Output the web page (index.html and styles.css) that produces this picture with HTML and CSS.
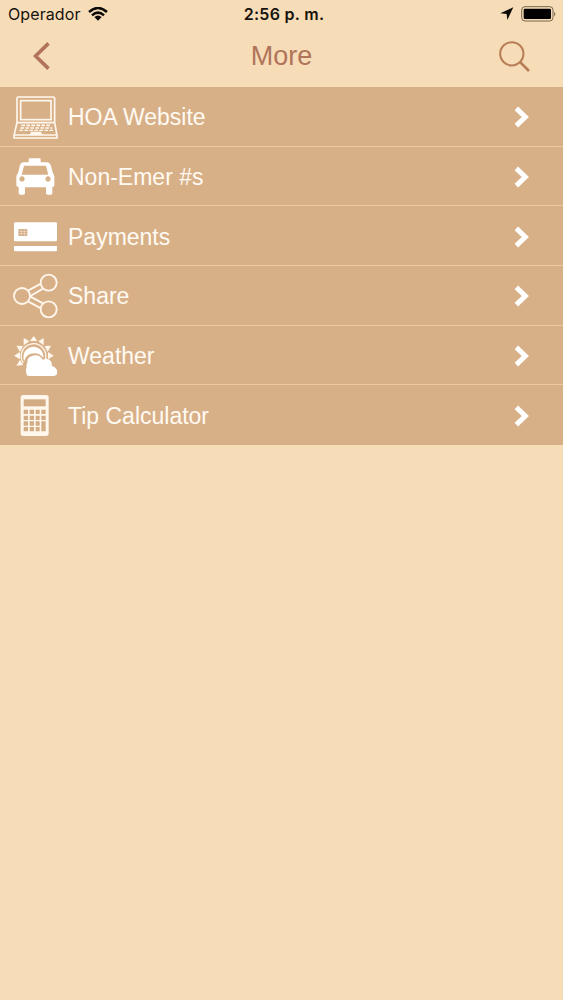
FILE: index.html
```html
<!DOCTYPE html>
<html lang="en">
<head>
<meta charset="utf-8">
<title>More</title>
<link rel="stylesheet" href="styles.css">
</head>
<body>
<header>
  <div class="status">
    <div class="carrier"><span>Operador</span>
      <svg class="wifi" viewBox="0 0 60 42"><path d="M3 15Q30-9 57 15M12 25Q30 9 48 25" fill="none" stroke="#0c0a07" stroke-width="7.5"/><path d="M19 30Q30 21 41 30L30 41Z" fill="#0c0a07"/></svg>
    </div>
    <div class="time">2:56 p. m.</div>
    <div class="indicators">
      <svg class="location" viewBox="0 0 42 42"><path d="M40 1 22 39 20 21 1 19Z" fill="#0c0a07"/></svg>
      <svg class="battery" viewBox="0 0 108 48"><rect x="2" y="2" width="94" height="43" rx="10" fill="none" stroke="#75664e" stroke-width="3"/><rect x="8" y="8" width="82" height="31" rx="4"/><path d="M100 17q6 6 0 14z" fill="#60533f"/></svg>
    </div>
  </div>
  <nav class="nav">
    <svg class="back" viewBox="0 0 50 84"><path d="M46 4 7 42 46 80" fill="none" stroke="#b1745a" stroke-width="11"/></svg>
    <h1>More</h1>
    <svg class="search" viewBox="0 0 92 92"><g fill="none" stroke="#b77d57" stroke-width="6"><circle cx="38" cy="38" r="34.5"/><path d="M62 62 89 89" stroke-width="8"/></g></svg>
  </nav>
</header>
<main class="menu">
  <a class="row">
    <svg class="icon" viewBox="0 9 204 179"><g fill="none" stroke="#fff7ec" stroke-width="5"><path d="M51 117V43q0-4 4-4H159q5 0 5 4v74M51 116H164L171 155v7H42v-7Z"/><rect x="62" y="50" width="91" height="57"/><path d="M42 153H171"/><path d="M64 124H154M61 132H157" stroke-width="5" stroke-dasharray="11 4"/><path d="M58 139H160" stroke-width="4" stroke-dasharray="11 4"/><path d="M92 151 95 146H121L124 151Z" fill="#fff7ec"/></g></svg>
    <span>HOA Website</span><svg class="chev" viewBox="0 0 45 66"><path d="M7 7 34 33 7 59" fill="none" stroke="#fff" stroke-width="15"/></svg>
  </a>
  <a class="row">
    <svg class="icon" viewBox="2 4 204 179"><path fill="#fff" fill-rule="evenodd" d="M88 50V41q0-3 3-3h30q3 0 3 3v9h20q7 0 10 8l7 25q4 5 4 10v26q0 5-6 5v19q0 4-5 4h-9q-5 0-5-4v-18H77v18q0 4-5 4h-9q-5 0-5-4v-19q-7 0-7-5V93q0-5 5-10l6-25q2-8 10-8ZM74 60 67 87H147L140 60ZM68 92a8 8 0 1 0 .1 0M146 92a8 8 0 1 0 .1 0"/></svg>
    <span>Non-Emer #s</span><svg class="chev" viewBox="0 0 45 66"><path d="M7 7 34 33 7 59" fill="none" stroke="#fff" stroke-width="15"/></svg>
  </a>
  <a class="row">
    <svg class="icon" viewBox="0 1 204 179"><g fill="#fff"><rect x="42" y="50" width="129" height="57" rx="4"/><path d="M42 121H171v13q0 3-3 3H45q-3 0-3-3Z"/></g><rect x="55" y="70" width="27" height="21" rx="4" fill="#d3aa80"/><path d="M55 77H82M55 84H82M64 70v21M73 70v21" stroke="#fff" stroke-width="1.2"/></svg>
    <span>Payments</span><svg class="chev" viewBox="0 0 45 66"><path d="M7 7 34 33 7 59" fill="none" stroke="#fff" stroke-width="15"/></svg>
  </a>
  <a class="row">
    <svg class="icon" viewBox="0 0 204 179"><g fill="none" stroke="#fff7ec" stroke-width="5.5"><circle cx="66" cy="90" r="24"/><circle cx="146" cy="50" r="24"/><circle cx="146" cy="130" r="24"/><path d="M84 74 123 53M90 91 129 68M90 91 129 112M84 106 123 127"/></g></svg>
    <span>Share</span><svg class="chev" viewBox="0 0 45 66"><path d="M7 7 34 33 7 59" fill="none" stroke="#fff" stroke-width="15"/></svg>
  </a>
  <a class="row">
    <svg class="icon" viewBox="0 1 204 179"><path fill="#fff7ec" d="M101 31 112 46H90ZM71 37 88 47 71 59ZM131 37V59L115 47ZM49 60 69 61 60 79ZM153 60 143 79 134 61ZM42 90 60 79V101ZM161 90 144 101V79ZM49 120 60 102 70 118Z"/><path d="M70 112A37 37 0 1 1 136 102" fill="none" stroke="#fff7ec" stroke-width="4"/><path fill="#fff" d="M73 106A30 30 0 1 1 130 97Q120 82 102 83 79 84 73 106ZM80 148Q76 132 80 125 78 117 82 111 80 94 98 90 119 85 129 103 138 94 149 103 157 109 155 121 167 123 171 134 175 149 162 151H89Q82 151 80 148Z"/></svg>
    <span>Weather</span><svg class="chev" viewBox="0 0 45 66"><path d="M7 7 34 33 7 59" fill="none" stroke="#fff" stroke-width="15"/></svg>
  </a>
  <a class="row">
    <svg class="icon" viewBox="0 -2 204 179"><rect x="62" y="28" width="84" height="123" rx="8" fill="#fff7ec"/><g fill="#d4ac83"><rect x="71" y="41" width="66" height="21"/><path d="M71 72h13v13H71zM89 72h13v13H89zM107 72h12v13H107zM124 72h13v13H124zM71 90h13v13H71zM89 90h13v13H89zM107 90h12v13H107zM124 90h13v13H124zM71 107h13v13H71zM89 107h13v13H89zM107 107h12v13H107zM124 107h13v30H124zM71 124h13v13H71zM89 124h13v13H89zM107 124h12v13H107z"/></g></svg>
    <span>Tip Calculator</span><svg class="chev" viewBox="0 0 45 66"><path d="M7 7 34 33 7 59" fill="none" stroke="#fff" stroke-width="15"/></svg>
  </a>
</main>
</body>
</html>
```
FILE: styles.css
```css
* { box-sizing: border-box; }
body {
  margin: 0;
  min-height: 1000px;
  background: #f6dcb7;
  font-family: "Liberation Sans", Arial, sans-serif;
}
svg { display: block; flex: none; }
header { height: 87px; }
.status {
  height: 27px;
  display: grid;
  grid-template-columns: 1fr auto 1fr;
  align-items: center;
  padding: 0 6px 0 8px;
  font: 16px/28px Inter, sans-serif;
  color: #17130d;
}
.carrier { display: flex; align-items: center; gap: 7px; }
.carrier span { font-size: 16px; letter-spacing: 0.1px; }
.wifi { width: 20px; height: 14px; }
.time { font-weight: 600; letter-spacing: 0.3px; padding-left: 3px; }
.indicators { display: flex; justify-content: flex-end; align-items: center; gap: 7px; }
.location { width: 14px; height: 14px; }
.battery { width: 36px; height: 16px; }
.nav {
  height: 58px;
  display: grid;
  grid-template-columns: 1fr auto 1fr;
  align-items: center;
  padding: 0 33px 0 33px;
}
.nav h1 {
  margin: 0;
  font-size: 27px;
  font-weight: 400;
  line-height: 58px;
  color: #b1745a;
}
.back { width: 17px; height: 28px; }
.search { width: 31px; height: 31px; justify-self: end; }
.menu {
  height: 358px;
  display: grid;
  grid-template-rows: repeat(6, 1fr);
  background: #d8b088;
}
.row {
  display: flex;
  align-items: center;
  padding-right: 34px;
  color: #fffaf2;
  font-size: 23px;
  min-height: 0;
}
.row:not(:last-child) { box-shadow: inset 0 -1px #edc9a2; }
.row span { flex: 1; line-height: 58px; padding-top: 1px; }
.icon { width: 68px; height: 59.67px; }
.chev { width: 15px; height: 22px; margin-top: 1px; }
```
